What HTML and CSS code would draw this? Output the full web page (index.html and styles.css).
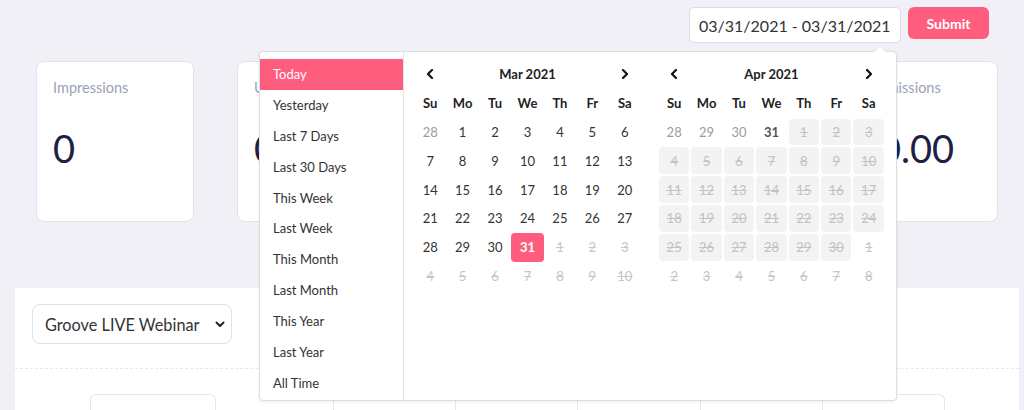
FILE: index.html
```html
<!DOCTYPE html>
<html>
<head>
<meta charset="utf-8">
<link rel="stylesheet" href="styles.css">
</head>
<body>
<div class="topbar">
  <div class="date-input">03/31/2021 - 03/31/2021</div>
  <button class="btn-submit">Submit</button>
</div>

<div class="cards">
  <div class="card"><div class="card-label">Impressions</div><div class="card-value">0</div></div>
  <div class="card"><div class="card-label">Unique Visitors</div><div class="card-value">0</div></div>
  <div class="card"><div class="card-label">Conversions</div><div class="card-value">0</div></div>
  <div class="card"><div class="card-label">Sales</div><div class="card-value">0</div></div>
  <div class="card"><div class="card-label">Commissions</div><div class="card-value">$0.00</div></div>
</div>

<div class="panel">
  <div class="panel-head">
    <div class="select">
      <span>Groove LIVE Webinar</span>
      <svg class="chev-down" width="10" height="7" viewBox="0 0 10 7"><path d="M1.5 1.5 L5 5 L8.5 1.5" fill="none" stroke="#222" stroke-width="2" stroke-linecap="round" stroke-linejoin="round"/></svg>
    </div>
  </div>
  <div class="panel-body">
    <div class="box box-a"></div>
    <div class="box box-b">
      <div class="seg"></div><div class="seg"></div><div class="seg"></div><div class="seg"></div><div class="seg"></div>
    </div>
  </div>
</div>

<div class="picker">
  <ul class="ranges">
    <li class="active">Today</li>
    <li>Yesterday</li>
    <li>Last 7 Days</li>
    <li>Last 30 Days</li>
    <li>This Week</li>
    <li>Last Week</li>
    <li>This Month</li>
    <li>Last Month</li>
    <li>This Year</li>
    <li>Last Year</li>
    <li>All Time</li>
  </ul>
  <div class="cal cal-left">
    <div class="grid">
      <div class="nav"><svg width="8" height="10" viewBox="0 0 8 10"><path d="M6 1 L2 5 L6 9" fill="none" stroke="#111" stroke-width="2.2" stroke-linecap="round" stroke-linejoin="round"/></svg></div>
      <div class="month">Mar 2021</div>
      <div class="nav"><svg width="8" height="10" viewBox="0 0 8 10"><path d="M2 1 L6 5 L2 9" fill="none" stroke="#111" stroke-width="2.2" stroke-linecap="round" stroke-linejoin="round"/></svg></div>
      <div class="dn">Su</div><div class="dn">Mo</div><div class="dn">Tu</div><div class="dn">We</div><div class="dn">Th</div><div class="dn">Fr</div><div class="dn">Sa</div>
      <div class="d off">28</div><div class="d">1</div><div class="d">2</div><div class="d">3</div><div class="d">4</div><div class="d">5</div><div class="d">6</div>
      <div class="d">7</div><div class="d">8</div><div class="d">9</div><div class="d">10</div><div class="d">11</div><div class="d">12</div><div class="d">13</div>
      <div class="d">14</div><div class="d">15</div><div class="d">16</div><div class="d">17</div><div class="d">18</div><div class="d">19</div><div class="d">20</div>
      <div class="d">21</div><div class="d">22</div><div class="d">23</div><div class="d">24</div><div class="d">25</div><div class="d">26</div><div class="d">27</div>
      <div class="d">28</div><div class="d">29</div><div class="d">30</div><div class="d act">31</div><div class="d x">1</div><div class="d x">2</div><div class="d x">3</div>
      <div class="d x">4</div><div class="d x">5</div><div class="d x">6</div><div class="d x">7</div><div class="d x">8</div><div class="d x">9</div><div class="d x">10</div>
    </div>
  </div>
  <div class="cal cal-right">
    <div class="grid">
      <div class="nav"><svg width="8" height="10" viewBox="0 0 8 10"><path d="M6 1 L2 5 L6 9" fill="none" stroke="#111" stroke-width="2.2" stroke-linecap="round" stroke-linejoin="round"/></svg></div>
      <div class="month">Apr 2021</div>
      <div class="nav"><svg width="8" height="10" viewBox="0 0 8 10"><path d="M2 1 L6 5 L2 9" fill="none" stroke="#111" stroke-width="2.2" stroke-linecap="round" stroke-linejoin="round"/></svg></div>
      <div class="dn">Su</div><div class="dn">Mo</div><div class="dn">Tu</div><div class="dn">We</div><div class="dn">Th</div><div class="dn">Fr</div><div class="dn">Sa</div>
      <div class="d off">28</div><div class="d off">29</div><div class="d off">30</div><div class="d off cur">31</div><div class="d dis">1</div><div class="d dis">2</div><div class="d dis">3</div>
      <div class="d dis">4</div><div class="d dis">5</div><div class="d dis">6</div><div class="d dis">7</div><div class="d dis">8</div><div class="d dis">9</div><div class="d dis">10</div>
      <div class="d dis">11</div><div class="d dis">12</div><div class="d dis">13</div><div class="d dis">14</div><div class="d dis">15</div><div class="d dis">16</div><div class="d dis">17</div>
      <div class="d dis">18</div><div class="d dis">19</div><div class="d dis">20</div><div class="d dis">21</div><div class="d dis">22</div><div class="d dis">23</div><div class="d dis">24</div>
      <div class="d dis">25</div><div class="d dis">26</div><div class="d dis">27</div><div class="d dis">28</div><div class="d dis">29</div><div class="d dis">30</div><div class="d x">1</div>
      <div class="d x">2</div><div class="d x">3</div><div class="d x">4</div><div class="d x">5</div><div class="d x">6</div><div class="d x">7</div><div class="d x">8</div>
    </div>
  </div>
</div>
</body>
</html>
```

FILE: styles.css
```css
* { box-sizing: border-box; }
html, body { margin: 0; height: 100%; overflow: hidden; }
body {
  background: #f0f0f6;
  font-family: "Lato", "Open Sans", sans-serif;
  color: #2a2a35;
  position: relative;
}

.topbar {
  display: flex;
  justify-content: flex-end;
  align-items: flex-start;
  gap: 7px;
  padding: 7px 35px 0 0;
}
.date-input {
  width: 212px;
  height: 36px;
  background: #fff;
  border: 1px solid #dcdce4;
  border-radius: 5px;
  display: flex;
  align-items: center;
  padding: 0 9px;
  font-size: 16px;
  color: #333;
  white-space: nowrap;
}
.btn-submit {
  width: 81px;
  height: 32px;
  border: 0;
  border-radius: 6px;
  background: #ff5d7d;
  color: #fff;
  font-family: inherit;
  font-weight: 700;
  font-size: 14px;
}

.cards {
  display: flex;
  gap: 43px;
  padding: 18px 26px 0 36px;
}
.card {
  width: 158px;
  height: 161px;
  background: #fff;
  border: 1px solid #e3e3eb;
  border-radius: 8px;
  padding: 16px 16px;
}
.card-label {
  font-size: 14.5px;
  line-height: 20px;
  color: #9aa1b6;
  white-space: nowrap;
}
.card-value {
  margin-top: 31px;
  font-size: 38px;
  line-height: 38px;
  color: #1d2146;
}

.panel {
  margin: 66px 5px 0 15px;
  background: #fff;
  height: 200px;
}
.panel-head {
  padding: 16px 17px 24px;
  border-bottom: 1px dashed #e6e8ef;
}
.select {
  width: 200px;
  height: 40px;
  border: 1px solid #dfe0e8;
  border-radius: 8px;
  display: flex;
  align-items: center;
  justify-content: space-between;
  padding: 0 6px 0 12px;
  font-size: 16.3px;
  color: #333;
}
.panel-body {
  display: flex;
  padding: 25px 0 0 75px;
}
.box {
  height: 60px;
  border: 1px solid #e5e6ee;
  border-bottom: 0;
  border-radius: 6px 6px 0 0;
}
.box-a { width: 126px; }
.box-b {
  width: 612px;
  margin-left: 117px;
  display: flex;
}
.seg { flex: 1; border-right: 1px solid #e5e6ee; }
.seg:last-child { border-right: 0; }

.picker {
  position: absolute;
  left: 259px;
  top: 51px;
  width: 638px;
  background: #fff;
  border: 1px solid #dedede;
  border-radius: 4px;
  box-shadow: 0 1px 3px rgba(0,0,0,0.08);
  display: flex;
  align-items: flex-start;
  z-index: 5;
}
.picker::before {
  content: "";
  position: absolute;
  top: -7px;
  right: 9px;
  border-left: 7px solid transparent;
  border-right: 7px solid transparent;
  border-bottom: 7px solid #dedede;
}
.picker::after {
  content: "";
  position: absolute;
  top: -6px;
  right: 10px;
  border-left: 6px solid transparent;
  border-right: 6px solid transparent;
  border-bottom: 6px solid #fff;
}
.ranges {
  list-style: none;
  margin: 0;
  padding: 7px 0 1px;
  width: 144px;
  border-right: 1px solid #e2e2e2;
  align-self: stretch;
}
.ranges li {
  height: 30.9px;
  line-height: 31px;
  padding-left: 13px;
  font-size: 13px;
  color: #333;
}
.ranges li.active {
  background: #ff5d7d;
  color: #fff;
}
.cal-left { padding: 8px 0 0 10px; }
.cal-right { padding: 8px 0 0 17px; }
.grid {
  display: grid;
  grid-template-columns: repeat(7, 32.43px);
  grid-auto-rows: 28.8px;
  font-size: 13px;
  line-height: 16px;
}
.nav {
  display: flex;
  align-items: center;
  justify-content: center;
}
.month {
  grid-column: span 5;
  display: flex;
  align-items: center;
  justify-content: center;
  font-weight: 700;
  color: #222;
}
.dn {
  display: flex;
  align-items: center;
  justify-content: center;
  font-weight: 700;
  color: #222;
}
.d {
  display: flex;
  align-items: center;
  justify-content: center;
  color: #333;
  border-radius: 4px;
}
.d.off { color: #9c9c9c; }
.d.cur { font-weight: 700; color: #555; }
.d.x { color: #c6c6c6; text-decoration: line-through; }
.d.dis {
  color: #c2c2c2;
  text-decoration: line-through;
  background: #f3f3f3;
  border: 1px solid #fff;
  border-radius: 5px;
}
.d.act {
  background: #ff5d7d;
  color: #fff;
  font-weight: 700;
}
```
